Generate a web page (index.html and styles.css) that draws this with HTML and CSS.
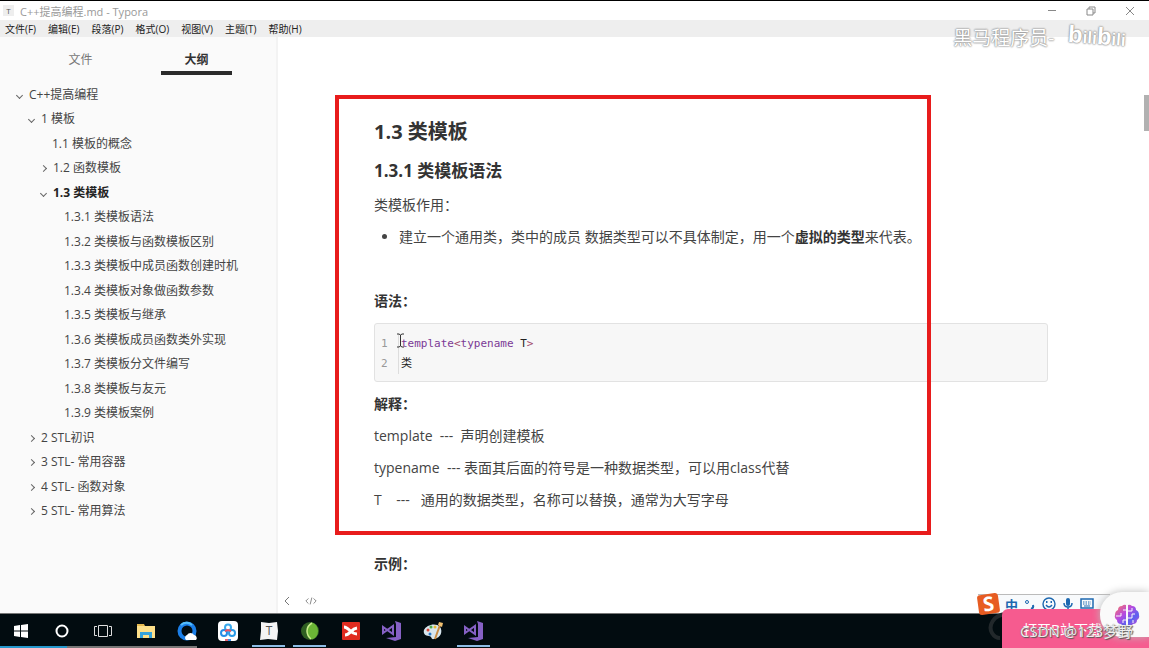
FILE: index.html
```html
<!DOCTYPE html>
<html lang="zh-CN">
<head>
  <meta charset="UTF-8">
  <title>C++提高编程.md - Typora</title>
  <link rel="stylesheet" href="styles.css">
</head>

<body>
<header class="titlebar">
  <span class="app-icon">T</span>
  <span class="title">C++提高编程.md - Typora</span>
  <div class="window-buttons">
    <button aria-label="最小化"><svg width="10" height="10" viewBox="0 0 10 10"><path d="M1 4.500h8"/></svg></button>
    <button aria-label="还原"><svg width="10" height="10" viewBox="0 0 10 10"><path d="M1 3h6v6H1zM3 3V1h6v6H7"/></svg></button>
    <button aria-label="关闭"><svg width="10" height="10" viewBox="0 0 10 10"><path d="M1 1l8 8M9 1L1 9"/></svg></button>
  </div>
</header>

<nav class="menu">
  <button>文件(F)</button>
  <button>编辑(E)</button>
  <button>段落(P)</button>
  <button>格式(O)</button>
  <button>视图(V)</button>
  <button>主题(T)</button>
  <button>帮助(H)</button>
</nav>

<div class="workspace">
  <aside class="sidebar">
    <div class="tabs">
      <button>文件</button>
      <button class="active">大纲</button>
    </div>
    <ul class="outline">
      <li class="open"><a href="#">C++提高编程</a></li>
      <li class="l1 open"><a href="#">1 模板</a></li>
      <li class="l2"><a href="#">1.1 模板的概念</a></li>
      <li class="l2 closed"><a href="#">1.2 函数模板</a></li>
      <li class="l2 open current"><a href="#">1.3 类模板</a></li>
      <li class="l3"><a href="#">1.3.1 类模板语法</a></li>
      <li class="l3"><a href="#">1.3.2 类模板与函数模板区别</a></li>
      <li class="l3"><a href="#">1.3.3 类模板中成员函数创建时机</a></li>
      <li class="l3"><a href="#">1.3.4 类模板对象做函数参数</a></li>
      <li class="l3"><a href="#">1.3.5 类模板与继承</a></li>
      <li class="l3"><a href="#">1.3.6 类模板成员函数类外实现</a></li>
      <li class="l3"><a href="#">1.3.7 类模板分文件编写</a></li>
      <li class="l3"><a href="#">1.3.8 类模板与友元</a></li>
      <li class="l3"><a href="#">1.3.9 类模板案例</a></li>
      <li class="l1 closed"><a href="#">2 STL初识</a></li>
      <li class="l1 closed"><a href="#">3 STL- 常用容器</a></li>
      <li class="l1 closed"><a href="#">4 STL- 函数对象</a></li>
      <li class="l1 closed"><a href="#">5 STL- 常用算法</a></li>
    </ul>
  </aside>

  <main class="editor">
    <article>
      <h2>1.3 类模板</h2>
      <h3>1.3.1 类模板语法</h3>
      <p>类模板作用：</p>
      <ul>
        <li>建立一个通用类，类中的成员 数据类型可以不具体制定，用一个<strong>虚拟的类型</strong>来代表。</li>
      </ul>
      <p class="blank"></p>
      <p><strong>语法：</strong></p>
      <div class="code">
        <div class="gutter">1<br>2</div>
        <pre><span class="kw">template</span><span class="op">&lt;</span><span class="kw">typename</span> T<span class="op">&gt;</span>
类</pre>
        <svg class="ibeam" width="7" height="15" viewBox="0 0 7 15"><path d="M0 1h2l1.500 1L5 1h2M3.500 2v11M0 14h2l1.500-1L5 14h2"/></svg>
      </div>
      <p><strong>解释：</strong></p>
      <p>template  ---  声明创建模板</p>
      <p>typename  --- 表面其后面的符号是一种数据类型，可以用class代替</p>
      <p>T    ---   通用的数据类型，名称可以替换，通常为大写字母</p>
      <p class="blank"></p>
      <p><strong>示例：</strong></p>
    </article>
    <div class="status">
      <button aria-label="收起侧栏"><svg width="8" height="10" viewBox="0 0 8 10"><path d="M6 1L2 5l4 4"/></svg></button>
      <button aria-label="源代码模式"><svg width="12" height="10" viewBox="0 0 14 10"><path d="M4 2L1 5l3 3M10 2l3 3-3 3M8 1L6 9"/></svg></button>
    </div>
    <div class="scroll-thumb"></div>
  </main>
</div>

<footer class="taskbar">
  <button aria-label="开始"><svg width="16" height="16" viewBox="0 0 16 16"><path fill="#fff" d="M1 3l6-1v5.500H1zM8 2l7-1v6.500H8zM1 8.500h6V14l-6-1zM8 8.500h7V15l-7-1z"/></svg></button>
  <button aria-label="Cortana"><svg width="16" height="16" viewBox="0 0 16 16"><circle cx="8" cy="8" r="5.500" fill="none" stroke="#fff" stroke-width="2"/></svg></button>
  <button aria-label="任务视图"><svg width="18" height="14" viewBox="0 0 18 14"><path fill="none" stroke="#ddd" d="M4.500 1.500h9v11h-9zM3 2.500H.5v9H3M15 2.500h2.500v9H15"/></svg></button>
  <button class="pinned" aria-label="文件资源管理器"><svg width="20" height="18" viewBox="0 0 20 18"><path fill="#e5b94f" d="M1 2h7l1 2h10v4H1z"/><path fill="#fde08a" d="M1 4h18v12H1z"/><path fill="#35a3dc" d="M4 16v-6h12v6h-3v-3H7v3z"/></svg></button>
  <button aria-label="QQ浏览器"><svg width="22" height="20" viewBox="0 0 22 20"><circle cx="11" cy="10" r="7.500" fill="none" stroke="#1b7fe8" stroke-width="4"/><path d="M5 4a8 8 0 0 1 11 0" fill="none" stroke="#55bdf9" stroke-width="2"/><path fill="#fff" d="M10 19a3 3 0 0 1 1-5 4 4 0 0 1 7 0 3 3 0 0 1 2 5z"/></svg></button>
  <button aria-label="百度网盘"><svg width="22" height="22" viewBox="0 0 22 22"><rect x="1" y="1" width="20" height="20" rx="4" fill="#fff"/><g fill="none" stroke-width="2"><circle cx="11" cy="7.500" r="3" stroke="#39a9ec"/><circle cx="7" cy="13" r="3" stroke="#268de6"/><circle cx="15" cy="13" r="3" stroke="#2b9be8"/><path d="M8 11l3-1 3 1" stroke="#ee5361"/></g><path d="M8 20h3" stroke="#ec6473" stroke-width="2"/><path d="M11 20h3" stroke="#398de6" stroke-width="2"/></svg></button>
  <button class="running" aria-label="Typora"><svg width="20" height="20" viewBox="0 0 20 20"><path fill="#f4f4f4" d="M2 1l8 1 8-1 1 9-1 9-9-1-8 1 1-9z"/><text x="10" y="14" text-anchor="middle" font-size="12" fill="#555">T</text></svg></button>
  <button class="running" aria-label="Camtasia"><svg width="20" height="20" viewBox="0 0 20 20"><circle cx="10" cy="10" r="9" fill="#2f5f22"/><path fill="#6bb536" d="M12 1.500a9 9 0 0 1 0 17C5 15 5 5 12 1.500z"/><path fill="none" stroke="#c8ec8c" stroke-width="1.500" d="M12 2C5 6 6 14 11 18"/></svg></button>
  <button aria-label="XMind"><svg width="20" height="20" viewBox="0 0 20 20"><rect x="1" y="1" width="18" height="18" rx="1" fill="#e02c20"/><path fill="none" stroke="#fff" stroke-width="3" d="M3 6c5 0 6 7 13 7M4 14c5 0 6-6 12-7"/></svg></button>
  <button aria-label="Visual Studio"><svg width="22" height="22" viewBox="0 0 22 22"><path fill="#8661c5" d="M14 1l6 2v16l-6 2-9-3 10-1V4z"/><path fill="none" stroke="#8661c5" stroke-width="2" d="M2 7v6l10-7v8z"/></svg></button>
  <button aria-label="画图"><svg width="22" height="20" viewBox="0 0 22 20"><path fill="#d8e6ee" d="M2 9c2-5 12-8 16-3 3 4 1 11-6 12-3 1-2-3-5-3-4 0-6-3-5-6z"/><circle cx="6" cy="9" r="1.500" fill="#d94a3a"/><circle cx="9" cy="6" r="1.500" fill="#4aa84a"/><circle cx="13" cy="6" r="1.500" fill="#e8b931"/><circle cx="8" cy="13" r="1.500" fill="#2877c7"/><path d="M13 18l5-14" stroke="#c98c43" stroke-width="2"/><path d="M16 4l1-3 4 1-1 4z" fill="#f0c070"/></svg></button>
  <button class="running" aria-label="Visual Studio"><svg width="22" height="22" viewBox="0 0 22 22"><path fill="#8661c5" d="M14 1l6 2v16l-6 2-9-3 10-1V4z"/><path fill="none" stroke="#8661c5" stroke-width="2" d="M2 7v6l10-7v8z"/></svg></button>
  <div class="progress"><span></span></div>
</footer>

<!-- everything below floats over the window -->
<div class="mark-box"></div>

<div class="watermark">
  <span>黑马程序员-</span>
  <span class="bili"><b>b</b>ili<b>b</b>ili</span>
</div>

<div class="ime">
  <span class="sogou">S</span>
  <span class="ime-mode">中</span>
  <svg width="12" height="12" viewBox="0 0 12 12"><circle cx="3" cy="4" r="1.500" fill="none" stroke="#1d68b0"/><path d="M9 7q1 3-2 4" fill="none" stroke="#1d68b0" stroke-width="2"/></svg>
  <svg width="14" height="14" viewBox="0 0 14 14"><g fill="none" stroke="#1d68b0" stroke-width="1.400"><circle cx="7" cy="7" r="6"/><path d="M4 8q3 4 6 0"/></g><path fill="#1d68b0" d="M4 4h1.500v2H4zM8.500 4H10v2H8.500z"/></svg>
  <svg width="12" height="14" viewBox="0 0 12 14"><rect x="4" y="1" width="4" height="8" rx="2" fill="#1d68b0"/><path d="M2 6q0 4 4 4t4-4M6 10v3" fill="none" stroke="#1d68b0" stroke-width="1.500"/></svg>
  <svg width="14" height="12" viewBox="0 0 14 12"><rect x="1" y="1" width="12" height="9" fill="none" stroke="#1d68b0" stroke-width="1.500"/><path d="M3 4h8M3 6h8" stroke="#1d68b0" stroke-dasharray="1.500 1"/><path d="M4 8h6" stroke="#1d68b0"/></svg>
</div>

<svg class="swirl" width="22" height="30" viewBox="0 0 22 30"><path d="M19 2C6 3 1 14 5 21q3 5 8 5" fill="none" stroke="#22282b" stroke-width="4"/></svg>
<button class="download">打开B站下载</button>
<button class="assistant" aria-label="助手">
  <svg width="26" height="26" viewBox="0 0 26 26">
    <defs>
      <linearGradient id="brain" x1="0" y1="0" x2="1" y2="1">
        <stop offset="0" stop-color="#ff7a5c"/>
        <stop offset=".4" stop-color="#b84ae0"/>
        <stop offset=".7" stop-color="#5a62f0"/>
        <stop offset="1" stop-color="#d84ad0"/>
      </linearGradient>
    </defs>
    <path fill="url(#brain)" d="M12 3v20q-3 2-5-1-4 0-4-4-3-2-2-5 0-4 3-5 0-4 4-4 2-2 4-1zM14 3v20q3 2 5-1 4 0 4-4 3-2 2-5 0-4-3-5 0-4-4-4-2-2-4-1z"/>
    <path d="M12 8H9M7 11v3H2M12 18H9v3M14 9h4V6M14 16h4v-4h3M19 18v3" fill="none" stroke="#fafafa"/>
  </svg>
</button>
<span class="credit">CSDN @123梦野</span>
</body>
</html>
```
FILE: styles.css
```css
* {
  box-sizing: border-box;
}

body {
  display: flex;
  flex-direction: column;
  position: relative;
  min-height: 100vh;
  margin: 0;
  overflow: hidden;
  background: #fff;
  color: #444;
  font-family: "Open Sans", "Noto Sans CJK SC", sans-serif;
  font-size: 14px;
}

button {
  padding: 0;
  border: 0;
  background: none;
  color: inherit;
  font: inherit;
}

svg {
  display: block;
}

a {
  color: inherit;
  text-decoration: none;
}

/* window frame */
.titlebar {
  display: flex;
  align-items: center;
  height: 20px;
  padding-left: 3px;
  border-top: 1px solid #000;
  color: #999;
  font-size: 11px;
}

.app-icon {
  width: 11px;
  margin-right: 6px;
  background: #eee;
  color: #555;
  font-size: 8px;
  line-height: 11px;
  text-align: center;
}

.window-buttons {
  display: flex;
  margin-left: auto;
}

.window-buttons button {
  display: flex;
  justify-content: center;
  width: 39px;
}

.window-buttons path {
  fill: none;
  stroke: #888;
}

.menu {
  display: flex;
  gap: 12px;
  height: 17px;
  padding-left: 5px;
  background: #eee;
  color: #222;
  font-size: 10px;
  line-height: 18px;
}

.workspace {
  display: flex;
  flex: 1;
}

/* outline */
.sidebar {
  width: 278px;
  padding-top: 11px;
  border-right: 2px solid #f3f3f3;
  background: #fafafa;
  font-size: 12px;
}

.tabs {
  display: flex;
  gap: 45px;
  padding-left: 45px;
}

.tabs button {
  width: 71px;
  border-bottom: 4px solid transparent;
  color: #777;
  line-height: 23px;
}

.tabs .active {
  border-color: #2b2b2b;
  color: #333;
  font-weight: bold;
}

.outline {
  margin: 8px 0 0;
  padding: 0;
  list-style: none;
}

.outline li {
  display: flex;
  align-items: center;
  padding-left: 14px;
  line-height: 24px;
}

.outline li:nth-child(odd) {
  margin-top: 1px;
}

.outline li:before {
  content: '';
  width: 4px;
  height: 4px;
  margin: 0 7px 0 3px;
}

.outline .open:before {
  border-right: 1px solid #666;
  border-bottom: 1px solid #666;
  transform: rotate(45deg);
}

.outline .closed:before {
  border-top: 1px solid #666;
  border-right: 1px solid #666;
  transform: rotate(45deg);
}

.outline .l1 {
  padding-left: 26px;
}

.outline .l2 {
  padding-left: 38px;
}

.outline .l3 {
  padding-left: 50px;
}

.outline .current {
  color: #222;
  font-weight: bold;
}

/* document */
.editor {
  display: flex;
  flex: 1;
  flex-direction: column;
  position: relative;
}

article {
  flex: 1;
  padding: 79px 101px 0 96px;
}

h2,
h3 {
  margin: 0 0 10px;
  color: #333;
}

h2 {
  font-size: 20px;
  line-height: 32px;
}

h3 {
  font-size: 17px;
  line-height: 26px;
}

strong {
  color: #333;
}

p,
article ul {
  margin: 10px 0;
  line-height: 22px;
  white-space: pre-wrap;
}

article ul {
  padding-left: 25px;
  white-space: normal;
}

.blank {
  height: 22px;
}

.code {
  display: flex;
  position: relative;
  margin: 11px 0;
  padding: 10px 0 7px;
  border: 1px solid #e2e2e2;
  border-radius: 3px;
  background: #f7f7f7;
  font-family: "DejaVu Sans Mono", "Noto Sans CJK SC", monospace;
  font-size: 11px;
  line-height: 20px;
}

.gutter {
  width: 24px;
  padding-left: 6px;
  border-right: 1px solid #ddd;
  color: #999;
}

pre {
  margin: 0;
  padding-left: 2px;
  color: #222;
  font: inherit;
}

.kw {
  color: #7b3a96;
}

.op {
  color: #a0496b;
}

.ibeam {
  position: absolute;
  top: 9px;
  left: 22px;
}

.ibeam path {
  fill: none;
  stroke: #333;
}

.status {
  display: flex;
  gap: 14px;
  padding: 0 0 7px 5px;
}

.status path {
  fill: none;
  stroke: #777;
}

.scroll-thumb {
  position: absolute;
  top: 58px;
  right: 0;
  width: 5px;
  height: 36px;
  background: #b1b1b1;
}

/* taskbar */
.taskbar {
  display: flex;
  position: relative;
  height: 35px;
  border-top: 1px solid #777;
  background: #020c10;
}

.taskbar button {
  display: flex;
  align-items: center;
  justify-content: center;
  position: relative;
  width: 41px;
}

.taskbar .pinned {
  margin-left: 2px;
}

.taskbar .running:after {
  content: '';
  position: absolute;
  right: 4px;
  bottom: 1px;
  left: 4px;
  height: 2px;
  background: #8dbde6;
}

.progress {
  position: absolute;
  bottom: 0;
  left: 0;
  width: 197px;
  height: 2px;
  background: #777;
}

.progress span {
  display: block;
  width: 34%;
  height: 2px;
  background: #2698cc;
}

/* overlays */
.mark-box {
  position: absolute;
  top: 95px;
  left: 335px;
  width: 596px;
  height: 440px;
  border: 4px solid #e81c1c;
}

.watermark {
  display: flex;
  align-items: center;
  gap: 14px;
  position: absolute;
  top: 19px;
  right: 23px;
  color: #fff;
  font-size: 19px;
  line-height: 34px;
  text-shadow: 0 0 2px #888, 0 0 2px #999, 0 0 1px #aaa;
}

.bili {
  font-family: "Liberation Sans", sans-serif;
  font-size: 17px;
  font-weight: bold;
  transform: rotate(4deg);
}

.bili b {
  font-size: 24px;
}

.ime {
  display: flex;
  align-items: center;
  gap: 6px;
  position: absolute;
  right: 39px;
  bottom: 35px;
  height: 19px;
  width: 132px;
  border-top: 1px solid #bbb;
  background: #f8fafc;
}

.sogou {
  flex: none;
  width: 21px;
  border-radius: 3px;
  background: #e75c22;
  color: #fff;
  font-size: 20px;
  font-weight: bold;
  line-height: 20px;
  text-align: center;
  transform: rotate(-8deg);
}

.ime-mode {
  color: #1d68b0;
  font-size: 13px;
  font-weight: bold;
}

.swirl {
  position: absolute;
  right: 140px;
  bottom: 6px;
}

.download {
  position: absolute;
  right: 0;
  bottom: 0;
  width: 147px;
  height: 39px;
  padding-right: 26px;
  border-radius: 6px 0 0 0;
  background: #f65b8f;
  color: #fff;
}

.assistant {
  display: flex;
  align-items: center;
  position: absolute;
  right: 0;
  bottom: 11px;
  width: 49px;
  height: 45px;
  padding-left: 14px;
  border-radius: 22px 0 0 22px;
  background: #fafafa;
  box-shadow: 0 0 8px #bbb;
}

.credit {
  position: absolute;
  right: 16px;
  bottom: 7px;
  color: #eee;
  font-size: 15px;
  line-height: 20px;
  text-shadow: 1px 1px 1px #555, 0 0 1px #666;
}
```
